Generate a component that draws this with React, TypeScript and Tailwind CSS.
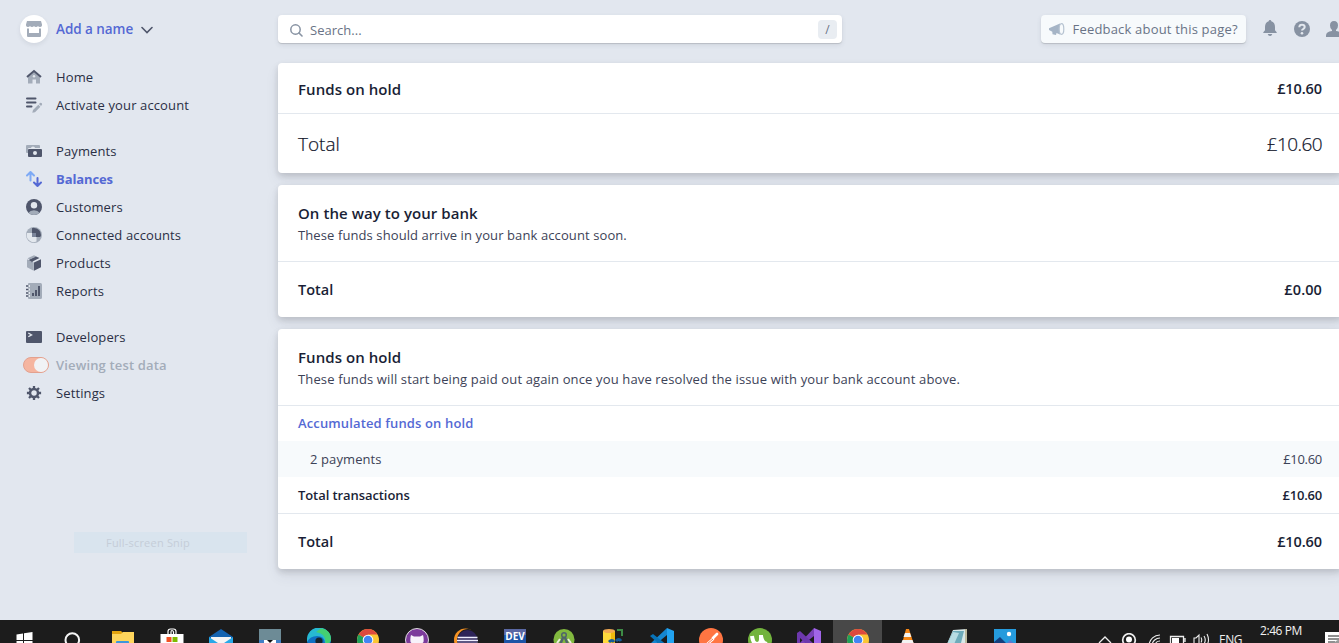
import React from "react";

const DARK = "#4f566b";
const LIGHT = "#a3acb9";

function Icon({ children, size = 16 }: { children: React.ReactNode; size?: number }) {
  return (
    <svg width={size} height={size} viewBox="0 0 16 16" className="block shrink-0 overflow-visible">
      {children}
    </svg>
  );
}

const icons = {
  home: (
    <Icon>
      <path d="M2 8 8 3l6 5V14.500H10V10.500H6.500V14.500H2Z" fill={LIGHT} />
      <circle cx="8" cy="7.300" r="1.200" fill="#e3e8ee" />
      <path d="M1 8 8 2l7 6" fill="none" stroke={DARK} strokeWidth="2" />
    </Icon>
  ),
  activate: (
    <Icon>
      <path d="M1 1.500h8.500M1 5.500h8.500M1 9.500h4.500" stroke={DARK} strokeWidth="2" strokeLinecap="round" />
      <path d="M6.300 15.800 7 13l5.300-5.300 2.100 2.100L9 15.200ZM13 7l1-1q1-.6 1.800.2.700.9 0 1.800l-.8.900Z" fill={LIGHT} />
    </Icon>
  ),
  payments: (
    <Icon>
      <path d="M0 3q0-1 1-1h12q1 0 1 1v2H3q-1 0-1 1v4H1q-1 0-1-1Z" fill={LIGHT} />
      <path d="M5 5a2 1.500 0 0 1 4 0Z" fill="#e3e8ee" />
      <rect x="2" y="6" width="14" height="8" rx="1" fill={DARK} />
      <circle cx="9" cy="10" r="2" fill="#e3e8ee" />
    </Icon>
  ),
  balances: (
    <Icon>
      <path d="M4.500 9.500V1.500M1 4.500l3.500-3.500L8 4.500" fill="none" stroke="#7eaaf5" strokeWidth="2" strokeLinecap="round" strokeLinejoin="round" />
      <path d="M11.500 7v8M8 11.500l3.500 3.500L15 11.500" fill="none" stroke="#5469d4" strokeWidth="2" strokeLinecap="round" strokeLinejoin="round" />
    </Icon>
  ),
  customers: (
    <Icon>
      <circle cx="8" cy="8" r="8" fill={DARK} />
      <path d="M2.500 13.800Q4 11.500 8 11.300q4 .2 5.500 2.500A8 8 0 0 1 2.500 13.800Z" fill={LIGHT} />
      <circle cx="8" cy="6.300" r="3.200" fill="#e3e8ee" />
    </Icon>
  ),
  connected: (
    <Icon>
      <circle cx="8" cy="8" r="8" fill={LIGHT} />
      <path d="M6 6V1.200Q7 0.500 8 1A7 7 0 0 1 15 8q0 1.500-1 2H10V6Z" fill={DARK} />
      <path d="M1 6H6v4h4.500v4.500A7 7 0 0 1 1 6Z" fill="#e3e8ee" />
      <path d="M6 6h4v4H6Z" fill="#7c869b" />
    </Icon>
  ),
  products: (
    <Icon>
      <path d="M1 4.200v8L7.800 15.700V7.500Z" fill={LIGHT} />
      <path d="M1.500 3.200 8 .2l2.500 1.200L3.500 4.500Z" fill={LIGHT} />
      <path d="m2.500 5 7.500-3.500L13.500 3 7.500 6 5.500 7.500v-1Z" fill={DARK} />
      <path d="m3 4.200 6-2.800" stroke={LIGHT} strokeWidth="1" />
      <path d="M8 7.500 15 4.200v8L8 15.700Z" fill={DARK} />
    </Icon>
  ),
  reports: (
    <Icon>
      <path d="M3 0h11.500Q16 0 16 1.500v13q0 1.500-1.500 1.500H3q-1 0-1-1V1q0-1 1-1Z" fill={LIGHT} />
      <path d="M0 3h4M0 6.500h4M0 10h4M0 13h4" stroke="#e3e8ee" strokeWidth="2.200" />
      <path d="M0 3h2.500M0 6.500h2.500M0 10h2.500M0 13h2.500" stroke={DARK} strokeWidth="1.400" />
      <path d="M6 10h2v3H6ZM9 7h2v6H9ZM12 3h2v10h-2Z" fill={DARK} />
    </Icon>
  ),
  developers: (
    <Icon>
      <rect y="2" width="16" height="12" rx="1" fill={DARK} />
      <path d="m2.300 4 3.300 1.900-3.300 1.900" fill="none" stroke="#e3e8ee" strokeWidth="1.300" />
    </Icon>
  ),
  settings: (
    <Icon>
      <circle cx="8" cy="8" r="4" fill="none" stroke={DARK} strokeWidth="2.500" />
      <path d="M8 .9v3M8 12.100v3M.9 8h3M12.100 8h3M3 3l2 2M11 11l2 2M3 13l2-2M11 5l2-2" stroke={DARK} strokeWidth="2.300" />
    </Icon>
  ),
};

function NavItem({ icon, label, className = "" }: { icon: React.ReactNode; label: string; className?: string }) {
  return (
    <div className="flex h-7 items-center">
      <span className="flex w-4 justify-center">{icon}</span>
      <span className={`ml-3.5 text-[13px] leading-5 whitespace-nowrap ${className || "tracking-[0.12px] text-[#2a2f45]"}`}>{label}</span>
    </div>
  );
}

function Sidebar() {
  return (
    <aside className="flex w-[278px] shrink-0 flex-col pl-[26px]">
      <div className="-ml-1.5 mt-[15px] flex h-7 items-center">
        <span className="flex size-7 items-center justify-center rounded-full bg-white shadow-[0_2px_4px_rgba(60,66,87,0.1)]">
          <Icon>
            <path d="M1 0h14l1 3.500v1Q15.500 6 14 6q-1.500 0-2-1-.6 1-2 1T8 5Q7.400 6 6 6T4 5q-.6 1-2 1Q.5 6 0 4.500v-1Z" fill={LIGHT} />
            <path d="M1 7.500h2V12h10V7.500h2V15q0 1-1 1H2q-1 0-1-1Z" fill={LIGHT} />
          </Icon>
        </span>
        <span className="ml-2 text-[13.5px] leading-5 font-semibold tracking-[-0.05px] whitespace-nowrap text-[#5469d4]">Add a name</span>
        <svg width="12" height="8" viewBox="0 0 12 8" className="mt-0.5 ml-2">
          <path d="m1 1.500 5 5 5-5" fill="none" stroke={DARK} strokeWidth="1.600" strokeLinecap="round" />
        </svg>
      </div>
      <nav className="mt-5 flex flex-col gap-[18px]">
        <div>
          <NavItem icon={icons.home} label="Home" />
          <NavItem icon={icons.activate} label="Activate your account" />
        </div>
        <div>
          <NavItem icon={icons.payments} label="Payments" />
          <NavItem icon={icons.balances} label="Balances" className="font-bold tracking-[-0.1px] text-[#5469d4]" />
          <NavItem icon={icons.customers} label="Customers" />
          <NavItem icon={icons.connected} label="Connected accounts" />
          <NavItem icon={icons.products} label="Products" />
          <NavItem icon={icons.reports} label="Reports" />
        </div>
        <div>
          <NavItem icon={icons.developers} label="Developers" />
          <NavItem
            icon={
              <span className="-mx-[3px] flex h-4 w-[26px] shrink-0 translate-x-0.5 justify-end rounded-full border border-[#e3a18f] bg-[#f5b5a0]">
                <span className="size-3.5 rounded-full bg-[#f1f3f6]" />
              </span>
            }
            label="Viewing test data"
            className="font-semibold tracking-[0.15px] text-[#a3acb9]"
          />
          <NavItem icon={icons.settings} label="Settings" />
        </div>
      </nav>
      <div className="mt-[125px] ml-12 flex h-[21px] w-[173px] items-center bg-[#d9e4ee] pt-px pl-8 text-[11px] tracking-[0.2px] text-[#c5cdd8]">Full-screen Snip</div>
    </aside>
  );
}

function Header() {
  return (
    <header className="mt-[15px] flex h-7 shrink-0 items-center">
      <div className="flex h-7 w-[564px] shrink-0 items-center rounded bg-white pr-[5px] pl-3 shadow-[0_1px_1px_rgba(0,0,0,0.14),0_2px_5px_rgba(60,66,87,0.1)]">
        <svg width="13" height="13" viewBox="0 0 13 13" className="mt-[3px]">
          <circle cx="5.500" cy="5.500" r="4.700" fill="none" stroke="#8792a2" strokeWidth="1.500" />
          <path d="m9 9 3 3" stroke="#8792a2" strokeWidth="1.600" strokeLinecap="round" />
        </svg>
        <span className="mt-[3px] ml-[7px] text-[13px] tracking-[0.02px] text-[#697386]">Search...</span>
        <span className="ml-auto flex h-[19px] w-[19px] items-center justify-center rounded bg-[#e9edf2] pt-px text-[12px] text-[#697386]">/</span>
      </div>
      <div className="ml-[199px] flex h-7 w-[205px] shrink-0 items-center rounded bg-[#f7fafc] pl-2 shadow-[0_1px_1px_rgba(0,0,0,0.14),0_2px_5px_rgba(60,66,87,0.1)]">
        <Icon>
          <path d="M0 7.200 11 2.500v11L7.500 12 7 14l-3.500-.8-.2-2.500L0 9Z" fill="#a5b4c6" />
          <ellipse cx="12.500" cy="8" rx="2.300" ry="5.300" fill="#f7fafc" stroke="#b6c3d1" strokeWidth="1.200" />
        </Icon>
        <span className="mt-[2px] ml-[7.5px] text-[13px] tracking-[0.19px] whitespace-nowrap text-[#697386]">Feedback about this page?</span>
      </div>
      <div className="ml-4 flex items-center gap-4">
        <Icon>
          <path d="M8-1q1.300 0 1.300 1.200Q13 1.500 13 6v3.200l1.700 2v.8H1.300v-.8l1.700-2V6Q3 1.500 6.700.2 6.700-1 8-1ZM5.700 13h4.600Q9.800 15 8 15t-2.300-2Z" fill="#8792a2" />
        </Icon>
        <Icon>
          <circle cx="8" cy="8" r="8" fill="#8792a2" />
          <path d="M5.300 6.200Q5.400 3.800 8 3.800t2.700 2.100q0 1.200-1.300 2Q8 8.700 8 9.600" fill="none" stroke="#e3e8ee" strokeWidth="2" />
          <circle cx="8" cy="12.200" r="1.300" fill="#e3e8ee" />
        </Icon>
        <Icon>
          <path d="M8 0q4 0 4 4.500 0 3.200-2 4.500v1q6 .8 6 4.500V16H0v-1.500Q0 10.800 6 10V9Q4 7.700 4 4.500 4 0 8 0Z" fill="#8792a2" />
        </Icon>
      </div>
    </header>
  );
}

const cardClass =
  "w-[1064px] shrink-0 rounded bg-white shadow-[0_7px_14px_rgba(60,66,87,0.08),0_3px_6px_rgba(0,0,0,0.14)]";
const headingClass = "text-[15px] leading-5 font-semibold text-[#1a1f36] tracking-[0.06px]";

function Main() {
  return (
    <main className="flex min-w-0 flex-1 flex-col">
      <Header />
      <div className="mt-5 flex flex-col gap-3 text-[#1a1f36]">
        <section className={cardClass}>
          <div className="flex h-[51px] items-center justify-between border-b border-[#e3e8ee] px-5 pt-[2px]">
            <span className={headingClass}>Funds on hold</span>
            <span className="text-[14.5px] leading-5 font-semibold tracking-[-0.1px]">£10.60</span>
          </div>
          <div className="flex h-[59px] items-center justify-between px-5 pt-px text-[19px] text-[#10142a]">
            <span className="font-light [-webkit-text-stroke:0.2px]">Total</span>
            <span className="font-light tracking-[-0.6px] [-webkit-text-stroke:0.2px]">£10.60</span>
          </div>
        </section>

        <section className={cardClass}>
          <div className="h-[77px] border-b border-[#e3e8ee] px-5 pt-[18px]">
            <h2 className={headingClass}>On the way to your bank</h2>
            <p className="mt-0.5 text-[13px] leading-5 tracking-[0.1px] text-[#3c4257]">These funds should arrive in your bank account soon.</p>
          </div>
          <div className="flex h-[55px] items-center justify-between px-5 text-[14.5px] font-semibold">
            <span>Total</span>
            <span className="tracking-[0.1px]">£0.00</span>
          </div>
        </section>

        <section className={cardClass}>
          <div className="h-[77px] border-b border-[#e3e8ee] px-5 pt-[18px]">
            <h2 className={headingClass}>Funds on hold</h2>
            <p className="mt-0.5 text-[13px] leading-5 tracking-[0.14px] text-[#3c4257]">
              These funds will start being paid out again once you have resolved the issue with your bank account above.
            </p>
          </div>
          <div className="flex h-[35px] items-center px-5 text-[13px] font-semibold tracking-[0.13px] text-[#5469d4]"><span>Accumulated funds on hold</span></div>
          <div className="flex h-9 items-center justify-between bg-[#f7fafc] pt-[2px] pr-5 pl-8 text-[13px] text-[#3c4257]">
            <span className="tracking-[0.1px]">2 payments</span>
            <span className="tracking-[-0.3px]">£10.60</span>
          </div>
          <div className="flex h-[37px] items-center justify-between border-b border-[#e3e8ee] px-5 pt-[2px] text-[13px] font-semibold">
            <span className="tracking-[-0.08px]">Total transactions</span>
            <span className="tracking-[-0.2px]">£10.60</span>
          </div>
          <div className="flex h-[55px] items-center justify-between px-5 text-[14.5px] font-semibold">
            <span>Total</span>
            <span className="tracking-[-0.1px]">£10.60</span>
          </div>
        </section>
      </div>
    </main>
  );
}

function Chrome() {
  return (
    <>
      <circle cx="12" cy="12" r="11" fill="#fbc634" />
      <path d="M12 12 2.500 6.500A11 11 0 0 1 21.500 6.500H12Z" fill="#dd4a3e" />
      <path d="M12 12 2.500 6.500A11 11 0 0 0 12 23Z" fill="#1fa05a" />
      <circle cx="12" cy="12" r="5.300" fill="#fff" />
      <circle cx="12" cy="12" r="4.300" fill="#4285f4" />
    </>
  );
}

/* Each drawing uses a 24-unit box whose top edge is 8px below the top of the bar. */
const apps: { name: string; active?: boolean; art: React.ReactNode }[] = [
  { name: "start", art: <path d="M4 5.500 10.500 4.500V11H4ZM11.500 4.300 20 3v8h-8.500ZM4 12h6.500v7L4 18ZM11.500 12H20v8l-8.500-1.200Z" fill="#fff" transform="translate(-.5 1)" /> },
  { name: "search", art: <circle cx="10.300" cy="12" r="6.800" fill="none" stroke="#f5f5f5" strokeWidth="2" /> },
  { name: "files", art: <><path d="M1 3h9l2 2v4H1Z" fill="#e5a50f" /><path d="M1 6h9l2-2h11v18H1Z" fill="#ffd65c" /><path d="M5 14q0-1 1-1h11q1 0 1 1v8H5Z" fill="#3c96dc" /></> },
  { name: "store", art: <><path d="M8 6V3.500Q8 1 10.500 1h3Q16 1 16 3.500V6M11 6V4q0-1.500 1-1.500T13.500 4v2" fill="none" stroke="#fff" strokeWidth="1.200" /><path d="M.5 6h23v17H.5Z" fill="#fff" /><path d="M6.500 9h5v5h-5Z" fill="#f25022" /><path d="M12.500 9h5v5h-5Z" fill="#7fba00" /></> },
  { name: "mail", art: <><path d="M0 9 12 1l12 8v14H0Z" fill="#1463b0" /><path d="M2 9h20v8H2Z" fill="#f5f5f5" /><path d="m0 9 12 8 12-8v14H0Z" fill="#27a8e8" /></> },
  { name: "capture", art: <><path d="M1 1h22v22H1Z" fill="#6d8b96" /><path d="M1 12h22v11H1Z" fill="#3f7fc5" /><path d="M6 12h12v3l-3 2H9l-3-2Z" fill="#fff" /><path d="m9 12 3 3 3-3Z" fill="#111" /></> },
  { name: "edge", art: <><circle cx="12" cy="12" r="12" fill="#0e70c4" /><path d="M0 12A12 12 0 0 1 24 11q0 5-6 5 0-8-8-8-7 0-10 6Z" fill="#27b9d2" /><path d="M14 .2Q24 2 24 11q0 5-6 5 2-10-9-12Z" fill="#44cf73" /><circle cx="12" cy="13" r="3.600" fill="#16242c" /></> },
  { name: "chrome", art: <Chrome /> },
  { name: "github", art: <><circle cx="12" cy="12" r="11.500" fill="#7c3b9b" stroke="#ddd" strokeWidth="1" /><path d="M6 7l3 1.500h6L18 7q1 3 .5 7L15 18H9l-3.500-4Q5 10 6 7Z" fill="#f7f2fa" /></> },
  { name: "eclipse", art: <><circle cx="11.500" cy="12" r="11.500" fill="#f79322" /><circle cx="14" cy="12" r="11" fill="#1c1c1c" /><circle cx="13.500" cy="12" r="10" fill="#2d2459" /><path d="M3.500 9.500h20M3 12.500h21M3 15.500h21" stroke="#eef" strokeWidth="1.500" /></> },
  { name: "dev", art: <><path d="M1 1h22v22H1Z" fill="#1c54a6" /><path d="M1 1h22v6H1Z" fill="#5a68a4" /><text x="12" y="11.500" textAnchor="middle" fontSize="10" fontWeight="700" fill="#fff">DEV</text></> },
  { name: "android", art: <><circle cx="12" cy="11.500" r="10.500" fill="#82b93f" /><path d="m12 7-4 10M12 7l4 10" stroke="#50646b" strokeWidth="2.500" /><circle cx="12" cy="7" r="2.300" fill="#82b93f" stroke="#50646b" strokeWidth="1.500" /><path d="M5 15l3-4M19 15l-3-4" fill="none" stroke="#e8efe0" strokeWidth="2" /></> },
  { name: "sql", art: <><path d="M2 3h12v20H2Z" fill="#ffda3c" /><path d="M10 3h4v20h-4Z" fill="#efb90d" /><ellipse cx="8" cy="3" rx="6" ry="2" fill="#f2aa54" /><path d="M16 2h5v6" fill="none" stroke="#3d8b46" strokeWidth="2" /><path d="M8 14q3-3 5 0m2-1q3-3 5 0" fill="none" stroke="#145b96" strokeWidth="3" /></> },
  { name: "vscode", art: <><path d="M17 0l7 3v20l-7-1Z" fill="#22a3f0" /><path d="M17 0v7L3 18.500 0 16Z" fill="#1486d0" /><path d="M0 8l3-2 14 11v6Z" fill="#0873b8" /></> },
  { name: "postman", art: <><circle cx="12" cy="12" r="12" fill="#ff7542" /><path d="m5 19 9-8M14 10l4-4" stroke="#fff" strokeWidth="2.600" strokeLinecap="round" /><path d="m8 16 6-5" stroke="#ff7542" strokeWidth="1" /></> },
  { name: "utorrent", art: <><circle cx="12" cy="12" r="12" fill="#72b33d" /><path d="M4 8q1 8 5 8 4 0 4-5V7M13 8q1 7 6 8" fill="none" stroke="#fff" strokeWidth="4" /></> },
  { name: "visual-studio", art: <><path d="M17 0l7 3v20h-7Z" fill="#a165e8" /><path d="M17 0v8L4 18l-3-1Z" fill="#7941b8" /><path d="M0 5l3-2 14 13v7L3 10v8H0Z" fill="#6d38ad" /></> },
  { name: "chrome-active", active: true, art: <Chrome /> },
  { name: "vlc", art: <><path d="M11 1h3l7 22H5Z" fill="#f58616" /><path d="M10 5h5l1.300 4H8.500ZM7.500 12h10l1.500 4H6Z" fill="#f3f3f3" /></> },
  { name: "notepad", art: <><path d="M9 2 23 1v22H0Z" fill="#d8e8e8" /><path d="M9 3h11l-5 20H0Z" fill="#6eabba" /><path d="m9 4 6 1-8 18H0Z" fill="#b8dce3" /><path d="M22 1v22" stroke="#a18b54" strokeWidth="1" /></> },
  { name: "photos", art: <><path d="M1 1h22v22H1Z" fill="#259bdd" /><path d="m1 14 6-5 7 7 3-2 6 4v5H1Z" fill="#143e7d" /><path d="m13 16 4-4 6 5v6Z" fill="#5b77cf" /><circle cx="16" cy="6" r="2.200" fill="#fff" /></> },
];

function Taskbar() {
  return (
    <footer className="flex h-[23px] shrink-0 overflow-hidden bg-[#1c1c1c] text-white">
      {apps.map((app) => (
        <div key={app.name} className={`flex h-10 w-[49px] shrink-0 justify-center pt-2 ${app.active ? "bg-[#484848]" : ""}`}>
          <svg width="24" height="24" viewBox="0 0 24 24" className="block">{app.art}</svg>
        </div>
      ))}
      <div className="ml-[68px] flex h-10 shrink-0 pt-[13px]">
        <svg width="114" height="16" viewBox="0 0 114 16" className="block shrink-0" fill="none" stroke="#eee" strokeWidth="1.300">
          <path d="m2 10 6-6 6 6" />
          <circle cx="32" cy="7" r="6.300" strokeWidth="1.700" />
          <circle cx="32" cy="6.500" r="3" fill="#fff" stroke="none" />
          <path d="M52 12A11 11 0 0 1 63 2M55 12a8 8 0 0 1 8-7M58 12a5 5 0 0 1 5-4" strokeWidth="1.100" />
          <path d="M73.500 3.500h13V11h-13ZM88 5v4" />
          <path d="M75 5h7v6h-7Z" fill="#fff" stroke="none" />
          <path d="M97 5h2l3-3v12l-3-3h-2ZM104 4.500q1.500 2.500 0 5M107 3q2.500 4 0 8M110 1q3 6 0 11" strokeWidth="1.100" />
        </svg>
        <span className="ml-[8px] text-[12px] leading-[13px] tracking-[-0.5px] text-[#eee]">ENG</span>
      </div>
      <span className="mt-[4px] ml-auto h-4 text-[12px] leading-[14px] tracking-[-0.4px] whitespace-nowrap text-[#f2f2f2]">2:46 PM</span>
      <svg width="14" height="14" viewBox="0 0 14 14" className="mt-3 ml-[23px] block shrink-0">
        <path d="M0 0h14v14H0Z" fill="#fff" />
        <path d="M3 4h11M3 7h11M3 10h7" stroke="#222" strokeWidth="1.200" />
        <circle cx="14" cy="13" r="5" fill="#999" />
      </svg>
    </footer>
  );
}

export default function App() {
  return (
    <div className="flex h-[643px] w-[1339px] flex-col overflow-hidden bg-[#e3e8ee] font-['Open_Sans','Noto_Sans',sans-serif]">
      <div className="flex h-[620px] shrink-0 overflow-hidden bg-[#e2e7ef]">
        <Sidebar />
        <Main />
      </div>
      <Taskbar />
    </div>
  );
}
